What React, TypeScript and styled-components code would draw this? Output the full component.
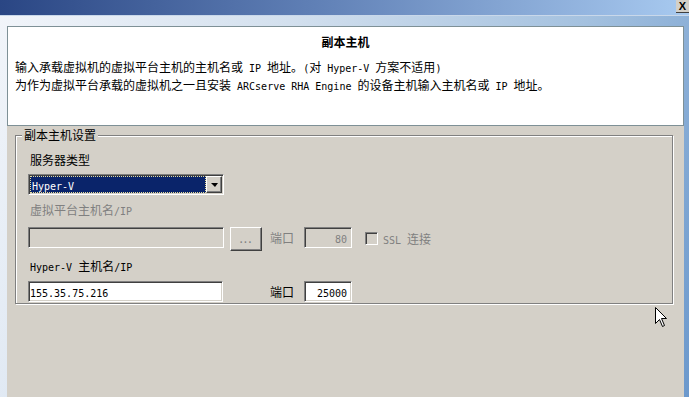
import React from 'react';
import styled, { createGlobalStyle } from 'styled-components';

const GlobalStyle = createGlobalStyle`
  html, body {
    margin: 0;
    padding: 0;
  }
  body {
    width: 689px;
    height: 397px;
    overflow: hidden;
    font-family: "Noto Sans CJK SC", "Liberation Sans", sans-serif;
    font-size: 12px;
    color: #000;
  }
`;

const Screen = styled.div`
  position: relative;
  width: 689px;
  height: 397px;
  overflow: hidden;
  display: flex;
  flex-direction: column;
  background: linear-gradient(112deg, #f2f5fa 0%, #d3e0ee 35%, #a4c1df 70%, #6b98cc 100%);
`;

const TitleBar = styled.div`
  height: 15px;
  flex-shrink: 0;
  display: flex;
  justify-content: flex-end;
  align-items: flex-start;
  background: linear-gradient(90deg, #2a4684 0%, #5f7fb5 45%, #a8caf0 100%);
  border-bottom: 1px solid #c9d8ea;
`;

const CloseButton = styled.div`
  width: 13px;
  height: 13px;
  box-sizing: border-box;
  background: #d4d0c8;
  border-bottom: 1px solid #404040;
  font-family: "Liberation Sans", sans-serif;
  font-weight: bold;
  font-size: 11px;
  line-height: 12px;
  text-align: center;
`;

const Dialog = styled.div`
  flex: 1;
  margin: 10px 5px 0 7px;
  display: flex;
  flex-direction: column;
`;

const Header = styled.div`
  height: 100px;
  box-sizing: border-box;
  flex-shrink: 0;
  background: #fff;
  border: 1px solid #7e9096;
  padding: 7px 7px 0 7px;
`;

const Heading = styled.div`
  font-weight: bold;
  text-align: center;
  line-height: 16px;
  height: 16px;
`;

const Description = styled.div`
  margin-top: 9px;
  line-height: 16px;
  white-space: nowrap;
`;

const Half = styled.span`
  font-family: "DejaVu Sans Mono", "Liberation Mono", monospace;
  font-size: 10px;
`;

const Body = styled.div`
  flex: 1;
  background: #d4d0c8;
  padding: 9px 11px 0 8px;
`;

const GroupBox = styled.div`
  position: relative;
  border: 1px solid #808080;
  box-shadow: 1px 1px 0 #fff, inset 1px 1px 0 #fff;
  padding: 0 0 1px 12px;
`;

const Legend = styled.div`
  position: absolute;
  top: -8px;
  left: 6px;
  padding: 0 2px;
  background: #d4d0c8;
  line-height: 14px;
`;

const FieldLabel = styled.div<{ $mt: number; $disabled?: boolean }>`
  margin-top: ${(p) => p.$mt}px;
  padding-left: 2px;
  height: 16px;
  line-height: 16px;
  white-space: nowrap;
  color: ${(p) => (p.$disabled ? '#808080' : '#000')};
`;

const sunken = `
  box-sizing: border-box;
  border: 1px solid;
  border-color: #808080 #fff #fff #808080;
  box-shadow: inset 1px 1px 0 #404040, inset -1px -1px 0 #d4d0c8;
`;

const raised = `
  box-sizing: border-box;
  border: 1px solid;
  border-color: #fff #404040 #404040 #fff;
  box-shadow: inset -1px -1px 0 #808080, inset 1px 1px 0 #d4d0c8;
  background: #d4d0c8;
`;

const Dropdown = styled.div`
  ${sunken}
  margin-top: 6px;
  width: 196px;
  height: 21px;
  padding: 1px;
  display: flex;
  background: #fff;
`;

const Selected = styled.div`
  flex: 1;
  box-sizing: border-box;
  background: #0a246a;
  border: 1px dotted #e6dc9a;
  color: #fff;
  padding-left: 1px;
  line-height: 15px;
`;

const ArrowButton = styled.div`
  ${raised}
  width: 16px;
  display: flex;
  align-items: center;
  justify-content: center;
`;

const Arrow = styled.span`
  width: 0;
  height: 0;
  border-left: 4px solid transparent;
  border-right: 3px solid transparent;
  border-top: 4px solid #000;
`;

const Row = styled.div<{ $mt: number }>`
  margin-top: ${(p) => p.$mt}px;
  height: 21px;
  display: flex;
  align-items: flex-start;
`;

const TextBox = styled.div<{ $w: number; $disabled?: boolean; $right?: boolean }>`
  ${sunken}
  width: ${(p) => p.$w}px;
  height: 21px;
  padding: 0 ${(p) => (p.$right ? 4 : 1)}px 0 1px;
  background: ${(p) => (p.$disabled ? '#d4d0c8' : '#fff')};
  color: ${(p) => (p.$disabled ? '#808080' : '#000')};
  text-align: ${(p) => (p.$right ? 'right' : 'left')};
  line-height: 19px;
  white-space: nowrap;
`;

const SmallButton = styled.div`
  ${raised}
  margin-left: 6px;
  width: 32px;
  height: 24px;
  color: #808080;
  text-align: center;
  line-height: 20px;
  letter-spacing: 1px;
`;

const PortLabel = styled.div<{ $ml: number; $disabled?: boolean }>`
  margin-left: ${(p) => p.$ml}px;
  width: 34px;
  line-height: 21px;
  color: ${(p) => (p.$disabled ? '#808080' : '#000')};
`;

const CheckBox = styled.div`
  ${sunken}
  margin: 5px 0 0 13px;
  width: 13px;
  height: 13px;
  background: #d4d0c8;
`;

const CheckLabel = styled.div`
  margin-left: 5px;
  line-height: 23px;
  color: #808080;
  white-space: nowrap;
`;

const Cursor = styled.svg`
  position: absolute;
  left: 655px;
  top: 307px;
`;

export default function App() {
  return (
    <Screen>
      <GlobalStyle />
      <TitleBar>
        <CloseButton>X</CloseButton>
      </TitleBar>
      <Dialog>
        <Header>
          <Heading>副本主机</Heading>
          <Description>
            输入承载虚拟机的虚拟平台主机的主机名或<Half> IP </Half>地址。<Half>(</Half>对
            <Half> Hyper-V </Half>方案不适用<Half>)</Half>
            <br />
            为作为虚拟平台承载的虚拟机之一且安装<Half> ARCserve RHA Engine </Half>
            的设备主机输入主机名或<Half> IP </Half>地址。
          </Description>
        </Header>
        <Body>
          <GroupBox>
            <Legend>副本主机设置</Legend>
            <FieldLabel $mt={16}>服务器类型</FieldLabel>
            <Dropdown>
              <Selected>
                <Half>Hyper-V</Half>
              </Selected>
              <ArrowButton>
                <Arrow />
              </ArrowButton>
            </Dropdown>
            <FieldLabel $mt={7} $disabled>
              虚拟平台主机名<Half>/IP</Half>
            </FieldLabel>
            <Row $mt={9}>
              <TextBox $w={196} $disabled />
              <SmallButton>...</SmallButton>
              <PortLabel $ml={8} $disabled>端口</PortLabel>
              <TextBox $w={48} $disabled $right>
                <Half>80</Half>
              </TextBox>
              <CheckBox />
              <CheckLabel>
                <Half>SSL </Half>连接
              </CheckLabel>
            </Row>
            <FieldLabel $mt={10}>
              <Half>Hyper-V </Half>主机名<Half>/IP</Half>
            </FieldLabel>
            <Row $mt={7}>
              <TextBox $w={195}>
                <Half>155.35.75.216</Half>
              </TextBox>
              <PortLabel $ml={47}>端口</PortLabel>
              <TextBox $w={48} $right>
                <Half>25000</Half>
              </TextBox>
            </Row>
          </GroupBox>
        </Body>
      </Dialog>
      <Cursor width="13" height="21" viewBox="0 0 13 21">
        <path
          d="M0.5 0.5 L0.5 16.5 L4.5 12.5 L7.5 19.5 L9.5 18.5 L6.5 11.5 L11.5 11.5 Z"
          fill="#fff"
          stroke="#000"
          strokeWidth="1"
          strokeLinejoin="miter"
        />
      </Cursor>
    </Screen>
  );
}
